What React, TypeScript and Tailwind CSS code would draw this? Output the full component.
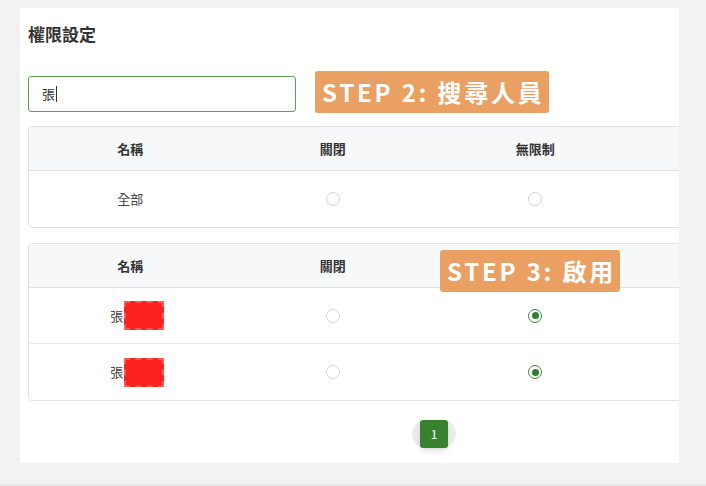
import React from 'react';

const columns = ['名稱', '關閉', '無限制', '部分'];

const Radio = ({ checked }: { checked?: boolean }) =>
  checked ? (
    <span className="flex h-[14px] w-[14px] items-center justify-center rounded-full border border-[#3d8b40] bg-white">
      <span className="h-[7px] w-[7px] rounded-full bg-[#2e7d32]" />
    </span>
  ) : (
    <span className="h-[14px] w-[14px] rounded-full border border-[#d4d4d4] bg-white" />
  );

const Redacted = () => (
  <div className="flex items-center pl-[14px]">
    <span>張</span>
    <span className="ml-[1px] h-[29px] w-[40px] border-2 border-dashed border-[#ff5a5a] bg-[#ff2020]" />
  </div>
);

const HeaderRow = () => (
  <div className="grid h-[44px] grid-cols-4 items-center border-b border-[#e2e2e2] bg-[#f7f8fa] text-[13px] font-semibold text-[#333]">
    {columns.map((c, i) => (
      <div key={i} className="text-center">
        {i < 3 ? c : ''}
      </div>
    ))}
  </div>
);

const Row = ({ name, on, last }: { name: React.ReactNode; on?: boolean; last?: boolean }) => (
  <div
    className={`grid h-[56px] grid-cols-4 items-center text-[13px] text-[#444] ${last ? '' : 'border-b border-[#ebebeb]'}`}
  >
    <div className="flex justify-center">{name}</div>
    <div className="flex justify-center">
      <Radio />
    </div>
    <div className="flex justify-center">
      <Radio checked={on} />
    </div>
    <div className="flex justify-center">
      <Radio />
    </div>
  </div>
);

export default function App() {
  return (
    <div className="flex h-[486px] flex-col bg-[#f2f2f2] font-['Noto_Sans_CJK_TC','Noto_Sans',sans-serif]">
      <div className="ml-[20px] mt-[8px] h-[455px] w-[659px] overflow-hidden bg-white">
        <div className="ml-[8px] w-[812px] pt-[14px]">
          <h1 className="text-[17px] font-semibold leading-[24px] text-[#333]">權限設定</h1>

          <div className="mt-[25px] flex items-end gap-[19px]">
            <div className="flex h-[36px] w-[268px] items-center rounded-[3px] border border-[#5c9e55] px-[13px] text-[13px] text-[#333]">
              張<span className="ml-[1px] h-[16px] w-px bg-[#333]" />
            </div>
            <div className="mb-[-1px] flex h-[42px] items-center rounded-[3px] bg-[#eaa062] pl-[7px] pr-[4px] text-[24px] font-bold tracking-[2.8px] text-white">
              STEP 2: 搜尋人員
            </div>
          </div>

          <div className="mt-[14px] overflow-hidden rounded-[4px] border border-[#e2e2e2]">
            <HeaderRow />
            <Row name="全部" last />
          </div>

          <div className="relative mt-[15px] overflow-hidden rounded-[4px] border border-[#e2e2e2]">
            <HeaderRow />
            <Row name={<Redacted />} on />
            <Row name={<Redacted />} on last />
            <div className="absolute left-[411px] top-[6px] flex h-[42px] items-center rounded-[3px] bg-[#eaa062] pl-[7px] pr-[4px] text-[24px] font-bold tracking-[2.8px] text-white">
              STEP 3: 啟用
            </div>
          </div>

          <div className="mt-[19px] flex justify-center pb-[15px]">
            <div className="flex items-center rounded-full bg-[#ececec] px-[8px]">
              <button className="h-[28px] w-[28px] rounded-[3px] bg-[#37812f] text-[12px] text-white shadow-md">1</button>
            </div>
          </div>
        </div>
      </div>
      <div className="flex-1" />
      <div className="h-[2px] bg-[#e6e8ec]" />
    </div>
  );
}
